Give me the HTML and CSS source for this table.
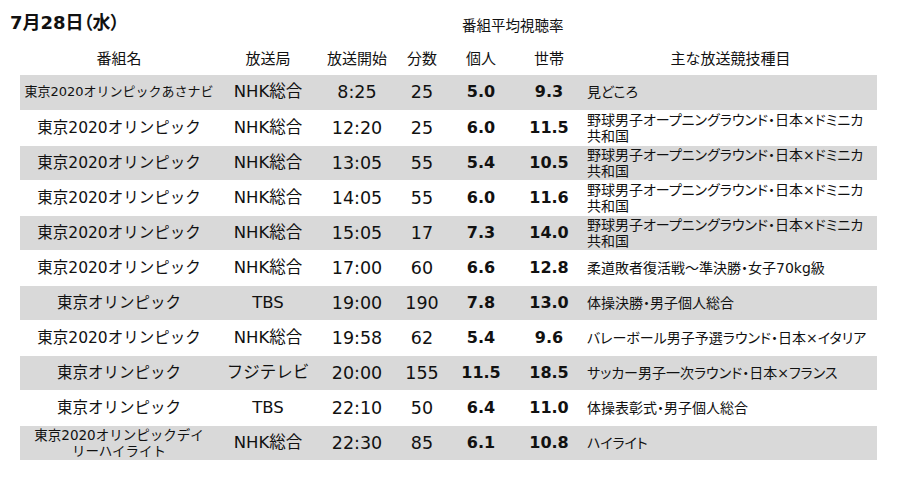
FILE: index.html
```html
<!DOCTYPE html>
<html lang="ja">
<head>
<meta charset="utf-8">
<link rel="stylesheet" href="styles.css">
</head>
<body>
<div class="top">
  <div class="date">7月28日（水）</div>
  <div class="avg">番組平均視聴率</div>
</div>
<table class="ratings">
  <colgroup>
    <col class="c-name"><col class="c-st"><col class="c-time"><col class="c-min"><col class="c-ind"><col class="c-hh"><col class="c-ev">
  </colgroup>
  <thead>
    <tr><th>番組名</th><th>放送局</th><th>放送開始</th><th>分数</th><th>個人</th><th>世帯</th><th>主な放送競技種目</th></tr>
  </thead>
  <tbody>
    <tr class="g"><td class="name small">東京2020オリンピックあさナビ</td><td class="st">NHK総合</td><td class="num">8:25</td><td class="num">25</td><td class="b">5.0</td><td class="b">9.3</td><td class="ev">見どころ</td></tr>
    <tr><td class="name">東京2020オリンピック</td><td class="st">NHK総合</td><td class="num">12:20</td><td class="num">25</td><td class="b">6.0</td><td class="b">11.5</td><td class="ev">野球男子オープニングラウンド・日本×ドミニカ<br>共和国</td></tr>
    <tr class="g"><td class="name">東京2020オリンピック</td><td class="st">NHK総合</td><td class="num">13:05</td><td class="num">55</td><td class="b">5.4</td><td class="b">10.5</td><td class="ev">野球男子オープニングラウンド・日本×ドミニカ<br>共和国</td></tr>
    <tr><td class="name">東京2020オリンピック</td><td class="st">NHK総合</td><td class="num">14:05</td><td class="num">55</td><td class="b">6.0</td><td class="b">11.6</td><td class="ev">野球男子オープニングラウンド・日本×ドミニカ<br>共和国</td></tr>
    <tr class="g"><td class="name">東京2020オリンピック</td><td class="st">NHK総合</td><td class="num">15:05</td><td class="num">17</td><td class="b">7.3</td><td class="b">14.0</td><td class="ev">野球男子オープニングラウンド・日本×ドミニカ<br>共和国</td></tr>
    <tr><td class="name">東京2020オリンピック</td><td class="st">NHK総合</td><td class="num">17:00</td><td class="num">60</td><td class="b">6.6</td><td class="b">12.8</td><td class="ev">柔道敗者復活戦～準決勝・女子70kg級</td></tr>
    <tr class="g"><td class="name">東京オリンピック</td><td class="st">TBS</td><td class="num">19:00</td><td class="num">190</td><td class="b">7.8</td><td class="b">13.0</td><td class="ev">体操決勝・男子個人総合</td></tr>
    <tr><td class="name">東京2020オリンピック</td><td class="st">NHK総合</td><td class="num">19:58</td><td class="num">62</td><td class="b">5.4</td><td class="b">9.6</td><td class="ev">バレーボール男子予選ラウンド・日本×イタリア</td></tr>
    <tr class="g"><td class="name">東京オリンピック</td><td class="st">フジテレビ</td><td class="num">20:00</td><td class="num">155</td><td class="b">11.5</td><td class="b">18.5</td><td class="ev">サッカー男子一次ラウンド・日本×フランス</td></tr>
    <tr><td class="name">東京オリンピック</td><td class="st">TBS</td><td class="num">22:10</td><td class="num">50</td><td class="b">6.4</td><td class="b">11.0</td><td class="ev">体操表彰式・男子個人総合</td></tr>
    <tr class="g"><td class="name two">東京2020オリンピックデイ<br>リーハイライト</td><td class="st">NHK総合</td><td class="num">22:30</td><td class="num">85</td><td class="b">6.1</td><td class="b">10.8</td><td class="ev">ハイライト</td></tr>
  </tbody>
</table>
</body>
</html>
```
FILE: styles.css
```css
html, body {
  margin: 0;
  padding: 0;
  background: #ffffff;
}
body {
  font-family: "DejaVu Sans", "Noto Sans CJK JP", sans-serif;
  color: #111111;
  width: 900px;
  height: 479px;
  overflow: hidden;
}
.top {
  display: flex;
  align-items: flex-end;
  height: 36px;
}
.date {
  font-weight: 700;
  font-size: 18px;
  line-height: 24px;
  padding-left: 10px;
  width: 452px;
  font-feature-settings: "palt";
  margin-bottom: 1px;
}
.avg {
  font-size: 14.5px;
  line-height: 20px;
  margin-bottom: 0;
}
.ratings {
  margin-left: 20px;
  width: 857px;
  border-collapse: collapse;
  table-layout: fixed;
}
.c-name { width: 198px; }
.c-st { width: 100px; }
.c-time { width: 78px; }
.c-min { width: 52px; }
.c-ind { width: 66px; }
.c-hh { width: 70px; }
.c-ev { width: 293px; }
.ratings th {
  font-weight: 400;
  font-size: 15px;
  height: 36px;
  padding: 3px 0 0 0;
  text-align: center;
  vertical-align: middle;
}
.ratings td {
  height: 34px;
  padding: 0;
  text-align: center;
  vertical-align: middle;
  font-size: 15px;
  line-height: 18px;
  white-space: nowrap;
}
.ratings td.name {
  font-size: 15.5px;
}
.ratings td.st {
  font-size: 16.5px;
}
.ratings td.num {
  font-size: 17.5px;
}
.ratings tr.g td {
  background: #d9d9d9;
}
.ratings tbody tr {
  border-top: 1px solid #ffffff;
}
.ratings tbody tr:first-child {
  border-top: 0;
  height: 35px;
}
.ratings td.b {
  font-weight: 700;
  font-size: 16px;
}
.ratings td.name.small {
  font-size: 13px;
}
.ratings td.name.two {
  font-size: 13.5px;
  line-height: 16px;
}
.ratings td.ev {
  text-align: left;
  padding-left: 3px;
  font-size: 14px;
  line-height: 16px;
  font-feature-settings: "palt";
}
```
